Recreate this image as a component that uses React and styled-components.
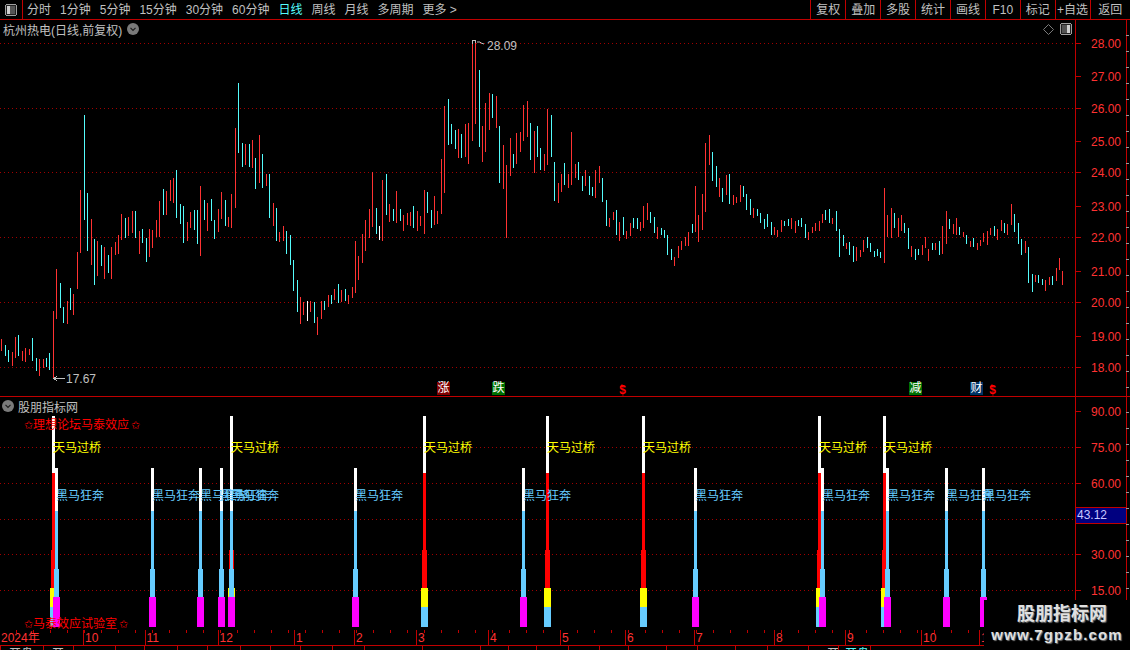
import React from "react";
import styled, { createGlobalStyle } from "styled-components";

const CJK = `"Liberation Sans", "Noto Sans CJK SC", sans-serif`;
const LINE = "#c00000";
const TEXT = "#c0c0c0";
const NUM = "#ff3232";

const GlobalStyle = createGlobalStyle`
  html, body { margin: 0; padding: 0; background: #000; }
  body { font-family: ${CJK}; font-size: 12px; }
`;

// low-high of each daily bar, left to right
const candles = `r339-351 c345-356 c350-362 r352-366 r337-358 c335-356 r351-361 r348-362 r349-355 c338-361 c358-371 r359-376 r359-368 c358-367 c353-370 r311-378
r269-319 c283-308 c307-323 r301-324 c288-310 r294-315 r252-289 r190-253 c115-220 c193-251 r219-265 c239-285 r241-276 c245-266 r247-279 c255-273 r247-279 r242-255 r235-254 r214-240
c218-238 r217-236 r211-233 c211-238 r231-254 c229-243 c238-262 r229-257 r230-248 r220-237 r201-237 c189-215 r191-215 r180-201 r178-203 c170-218 c204-224 c206-243 r222-241 r212-228
c210-230 c210-244 r186-256 c200-220 r203-231 c199-221 c220-239 r209-232 r192-219 c200-226 r217-227 r194-228 r128-208 c83-153 c143-167 r144-165 c144-167 r140-168 c158-189 r135-183
c154-188 r174-186 c174-218 r203-226 c208-241 r232-242 r226-241 c231-254 c235-265 c260-291 c280-312 r297-324 r302-315 w301-321 r301-312 c302-323 r317-335 r301-319 c301-310 r295-307
c295-304 r289-300 c284-303 r290-302 c289-301 r295-304 r287-298 r241-293 r256-280 r234-263 r220-251 r209-238 r172-227 c208-234 w226-240 r180-241 c174-215 r204-222 c209-221 r191-223
c209-221 r215-231 r213-225 r212-226 c206-228 r211-231 r216-226 r190-234 c192-213 c210-228 r196-225 r211-224 r159-214 r106-193 c99-145 c124-144 c130-149 r129-158 c134-158 r124-157
r123-164 r40-141 r43-124 c70-147 r126-162 r103-152 r93-130 c94-118 r96-128 c126-183 r145-189 r165-238 r138-176 c154-168 r133-164 r132-152 r105-141 r101-137 c123-160 r131-173
c126-157 c148-170 r154-171 r109-165 c115-157 c162-201 r183-203 r174-192 c163-185 r174-188 r132-185 r164-178 c162-180 c176-191 r170-186 c176-195 c187-196 r170-198 r166-183 c178-202
c200-226 r218-227 r212-220 c210-235 r222-241 c217-235 r231-239 r223-236 c218-228 c218-229 r222-231 r206-228 r203-220 c212-223 c217-233 r227-239 c228-235 c230-238 c235-255 c249-260
r257-266 r246-258 r241-250 r237-246 r232-246 c224-233 r186-232 r215-242 r194-230 r143-212 r135-165 c152-181 c166-187 r178-197 c188-202 r175-195 c174-204 r195-205 r197-203 r185-202
c186-197 c194-210 c199-215 r208-218 c209-216 c213-223 c219-229 c214-227 c222-235 r227-235 r230-237 r220-232 c221-226 c219-226 r218-229 r221-233 c220-226 c218-227 c224-238 r232-240
r227-233 r223-231 r221-231 r214-223 c210-220 c209-223 r218-224 c211-231 c229-257 c235-246 r243-249 c242-255 c246-262 r247-261 r250-257 r240-252 c237-248 c243-252 c251-257 c249-256
c252-258 r188-263 r215-237 r208-238 c213-228 r218-237 r215-231 c223-233 c228-249 r246-257 c249-260 c249-255 r245-255 r237-248 r249-261 c243-250 r243-250 c241-255 r226-254 r211-244
c219-229 r224-234 r218-235 c227-235 r232-237 c235-244 r241-247 c238-247 r243-250 r240-246 r233-242 r231-245 r228-235 c226-236 r229-240 r220-231 c223-233 r224-235 r204-225 c214-232
c223-244 c239-255 r241-253 c247-283 c274-292 r275-282 c275-283 c279-285 r280-291 r277-285 c276-285 r268-281 r258-270 r271-285`
  .split(/\s+/)
  .map((s, i) => {
    const [top, bottom] = s.slice(1).split("-").map(Number);
    return { x: Math.round(1.3 + i * 3.434), top, bottom, kind: s[0] };
  });

const CANDLE_COLOR = { r: "#ff3232", c: "#54fcfc", w: "#ffffff" };
const priceGrid = [43.5, 108.5, 172.5, 237.5, 302.5, 367.5];
const indGrid = [447.5, 483.5, 519.5, 554.5, 590.5];

const priceLabels = [
  ["28.00", 44], ["27.00", 77], ["26.00", 109], ["25.00", 142], ["24.00", 173], ["23.00", 207],
  ["22.00", 238], ["21.00", 272], ["20.00", 303], ["19.00", 337], ["18.00", 368],
];
const indLabels = [["90.00", 412], ["75.00", 448], ["60.00", 484], ["30.00", 555], ["15.00", 591]];

// left edge of the white stem of each signal
const bridges = [52, 230, 423, 546, 642, 818, 883];
const horses = [55, 151, 199, 220, 230, 354, 522, 694, 821, 886, 945, 982];

const leftTabs = ["分时", "1分钟", "5分钟", "15分钟", "30分钟", "60分钟", "日线", "周线", "月线", "多周期"];
const rightTabs = ["复权", "叠加", "多股", "统计", "画线", "F10", "标记", "+自选", "返回"];

const dates = [
  ["2024年", 83], ["10", 61.5], ["11", 73], ["12", 76.5], ["1", 60], ["2", 62], ["3", 72], ["4", 72],
  ["5", 65], ["6", 69], ["7", 80], ["8", 71], ["9", 76], ["10", 58], ["1", 30],
];
const statusCells = [
  { w: 43, text: "开盘", pad: 8 }, { w: 30, text: "开", pad: 8 }, { w: 42 }, { w: 29 }, { w: 33 }, { w: 30 },
  { w: 33 }, { w: 30 }, { w: 30 }, { w: 32 }, { w: 32 }, { w: 58 }, { w: 58 }, { w: 28 }, { w: 28 }, { w: 32 },
  { w: 31 }, { w: 29 }, { w: 38 }, { w: 31 }, { w: 38 }, { w: 32 }, { w: 41 },
  { w: 30, text: "开", pad: 18 }, { w: 32, text: "开盘", pad: 6, color: "#54fcfc" }, { w: 114 },
];

const Page = styled.div`
  position: relative;
  width: 1130px;
  height: 650px;
  overflow: hidden;
  background: #000;
  color: ${TEXT};
`;

const Toolbar = styled.div`
  display: flex;
  height: 19px;
  border-bottom: 1px solid ${LINE};
  line-height: 20px;
`;

const IconCell = styled.div`
  display: flex;
  align-items: center;
  justify-content: center;
  width: 22px;
  border-right: 1px solid ${LINE};
`;

const TabGroup = styled.div`
  display: flex;
  flex: 1;
  gap: 9px;
  padding-left: 4px;
`;

const Tab = styled.span`
  color: ${(p) => (p.$active ? "#54fcfc" : TEXT)};
  white-space: nowrap;
`;

const ToolButton = styled.div`
  width: ${(p) => p.$w || 34.9}px;
  border-left: 1px solid ${LINE};
  text-align: center;
  white-space: nowrap;
  box-sizing: border-box;
`;

const Panel = styled.div`
  display: flex;
  height: ${(p) => p.$h}px;
  border-bottom: 1px solid ${(p) => p.$line || LINE};
  box-sizing: border-box;
`;

const Plot = styled.div`
  position: relative;
  width: 1075px;
`;

const ChartSvg = styled.svg`
  position: absolute;
  left: 0;
  top: 0;
  display: block;
  shape-rendering: crispEdges;
`;

const GridLine = styled.line`
  stroke: #a00000;
  stroke-dasharray: 1 3;
  shape-rendering: auto;
`;

const PanelHead = styled.div`
  position: relative;
  display: flex;
  align-items: center;
  gap: ${(p) => p.$gap}px;
  height: 18px;
  padding-left: ${(p) => p.$pad}px;
  white-space: nowrap;
`;

const HeadIcons = styled.div`
  display: flex;
  align-items: center;
  gap: 6px;
  margin-left: auto;
  margin-right: 3px;
`;

const Axis = styled.div`
  position: relative;
  width: 52px;
  border-left: 1px solid ${LINE};
  border-right: 1px solid ${LINE};
  box-sizing: border-box;
  &::after {
    content: "";
    position: absolute;
    left: 100%;
    top: 0;
    bottom: 0;
    width: 3px;
    background: repeating-linear-gradient(180deg, transparent 0 15px, #9a9a9a 15px 16px);
  }
`;

const AxisLabel = styled.span`
  position: absolute;
  left: 15px;
  top: ${(p) => p.$y}px;
  transform: translateY(-50%);
  color: ${NUM};
  line-height: 14px;
  &::before {
    content: "";
    position: absolute;
    left: -15px;
    top: 6px;
    width: 5px;
    height: 1px;
    background: ${LINE};
  }
`;

const CurrentValue = styled.div`
  position: absolute;
  left: 0;
  right: 0;
  top: ${(p) => p.$y}px;
  height: 15px;
  line-height: 15px;
  background: #000080;
  border-top: 1px solid ${LINE};
  border-bottom: 1px solid ${LINE};
  color: #c8c8ff;
  padding-left: 1px;
`;

const Extreme = styled.span`
  position: absolute;
  left: ${(p) => p.$x}px;
  top: ${(p) => p.$y}px;
  line-height: 14px;
  white-space: nowrap;
`;

const EventBadge = styled.span`
  position: absolute;
  left: ${(p) => p.$x}px;
  top: 362px;
  width: 13px;
  height: 13px;
  background: ${(p) => p.$bg};
  color: #fff;
  font-size: 12px;
  line-height: 13px;
  text-align: center;
`;

const Dollar = styled.span`
  position: absolute;
  left: ${(p) => p.$x}px;
  top: 367px;
  width: 7px;
  color: #ff0000;
  font: bold 12px/9px "Liberation Mono", monospace;
  &::before {
    content: "";
    position: absolute;
    left: 1px;
    top: -3px;
    border-left: 2.5px solid transparent;
    border-right: 2.5px solid transparent;
    border-bottom: 3px solid #ff0000;
  }
`;

const SignalLabel = styled.span`
  position: absolute;
  left: ${(p) => p.$x}px;
  top: ${(p) => p.$y}px;
  color: ${(p) => p.$color};
  line-height: 14px;
  white-space: nowrap;
`;

const Star = styled.span`
  display: inline-block;
  width: 8px;
  font-family: "DejaVu Sans", sans-serif;
  font-size: 11px;
  font-weight: bold;
  text-align: center;
  margin: 0 ${(p) => p.$gap || 1}px 0 ${(p) => (p.$gap ? 2 : 0)}px;
`;

const DateRow = styled.div`
  display: flex;
  height: 15px;
  line-height: 17px;
  border-bottom: 1px solid ${LINE};
  background: repeating-linear-gradient(90deg, transparent 0 16px, ${LINE} 16px 17px) top / 100% 3px no-repeat;
  color: ${NUM};
`;

const DateCell = styled.div`
  width: ${(p) => p.$w}px;
  flex: none;
  padding-left: 1px;
  box-sizing: border-box;
  border-left: ${(p) => (p.$first ? "none" : `1px solid ${LINE}`)};
  white-space: nowrap;
  overflow: hidden;
`;

const StatusRow = styled.div`
  display: flex;
  height: 4px;
  overflow: hidden;
`;

const StatusCell = styled.div`
  width: ${(p) => p.$w}px;
  flex: none;
  box-sizing: border-box;
  border-left: 1px solid ${LINE};
  padding-left: ${(p) => p.$pad || 0}px;
  line-height: 17px;
  color: ${(p) => p.$color || TEXT};
  white-space: nowrap;
`;

const Watermark = styled.div`
  position: absolute;
  right: 0;
  bottom: 0;
  width: 146px;
  height: 50px;
  background: #000;
  display: flex;
  flex-direction: column;
  align-items: center;
  color: #e0e0e0;
  font-weight: bold;
`;

const WaterTitle = styled.div`
  font-size: 18px;
  line-height: 24px;
  margin: 2px 0 0 10px;
  text-shadow: 1px 1px 1px #777;
`;

const WaterUrl = styled.div`
  font-size: 15px;
  line-height: 18px;
  letter-spacing: 1.1px;
  font-family: "Liberation Sans", sans-serif;
  text-shadow: 1px 1px 1px #777;
`;

function RoundChevron() {
  return (
    <svg width="12" height="12" viewBox="0 0 12 12">
      <circle cx="6" cy="6" r="6" fill="#7a7a7a" />
      <path d="M3.5 4.8 L6 7.3 L8.5 4.8" fill="none" stroke="#1c1c1c" strokeWidth="1.2" />
    </svg>
  );
}

function PanelIcon({ side }) {
  return (
    <svg width="12" height="12" viewBox="0 0 12 12" shapeRendering="crispEdges">
      <rect x="0.5" y="0.5" width="11" height="11" rx="2" fill="#222" stroke="#a0a0a0" />
      <rect x={side === "right" ? 7 : 2} y="2" width="3" height="8" fill="#d0d0d0" />
      <rect x={side === "right" ? 2 : 5} y="2" width="5" height="8" fill="#555" />
    </svg>
  );
}

function DiamondIcon() {
  return (
    <svg width="11" height="11" viewBox="0 0 11 11">
      <path d="M5.5 0.5 L10.5 5.5 L5.5 10.5 L0.5 5.5 Z" fill="none" stroke="#7a7a7a" />
    </svg>
  );
}

function PriceChart() {
  return (
    <ChartSvg width="1075" height="377" viewBox="0 20 1075 377">
      {priceGrid.map((y) => (
        <GridLine key={y} x1="0" x2="1075" y1={y} y2={y} />
      ))}
      {candles.map((c, i) => (
        <rect key={i} x={c.x} y={c.top} width="1" height={c.bottom - c.top} fill={CANDLE_COLOR[c.kind]} />
      ))}
      <path d="M472.5 44 V40.5 H475.5 V43" fill="none" stroke={TEXT} />
      <path d="M477 42 L480 42 L481 43 L484 44" fill="none" stroke={TEXT} shapeRendering="auto" />
      <path d="M53 378.5 H65 M53 378.5 L57 376.5 M53 378.5 L57 380.5" fill="none" stroke={TEXT} />
    </ChartSvg>
  );
}

function IndicatorChart() {
  const bar = (x, w, y1, y2, fill, key) => (
    <rect key={key} x={x} y={y1} width={w} height={y2 - y1} fill={fill} />
  );
  return (
    <ChartSvg width="1075" height="233" viewBox="0 397 1075 233">
      {indGrid.map((y) => (
        <GridLine key={y} x1="0" x2="1075" y1={y} y2={y} />
      ))}
      {bridges.map((x) => (
        <g key={x}>
          {bar(x, 3, 416, 473, "#ffffff", "a")}
          {bar(x, 3, 473, 550, "#ff0000", "b")}
          {bar(x - 1, 5, 550, 588, "#ff0000", "c")}
          {bar(x - 2, 7, 588, 607, "#ffff00", "d")}
          {bar(x - 2, 7, 607, 627, "#66ccff", "e")}
        </g>
      ))}
      {horses.map((x) => (
        <g key={x}>
          {bar(x, 3, 468, 511, "#ffffff", "a")}
          {bar(x, 3, 511, 569, "#66ccff", "b")}
          {bar(x - 1, 5, 569, 597, "#66ccff", "c")}
          {bar(x - 2, 7, 597, 627, "#ff00ff", "d")}
        </g>
      ))}
    </ChartSvg>
  );
}

function App() {
  return (
    <Page>
      <GlobalStyle />
      <Toolbar>
        <IconCell>
          <PanelIcon side="left" />
        </IconCell>
        <TabGroup>
          {leftTabs.map((t) => (
            <Tab key={t} $active={t === "日线"}>{t}</Tab>
          ))}
          <Tab>更多 &gt;</Tab>
        </TabGroup>
        {rightTabs.map((t, i) => (
          <ToolButton key={t} $w={i === rightTabs.length - 1 ? 40.5 : undefined}>{t}</ToolButton>
        ))}
      </Toolbar>

      <Panel $h={377}>
        <Plot>
          <PriceChart />
          <PanelHead $pad={3} $gap={5}>
            <span>杭州热电(日线,前复权)</span>
            <RoundChevron />
            <HeadIcons>
              <DiamondIcon />
              <PanelIcon side="right" />
            </HeadIcons>
          </PanelHead>
          <Extreme $x={487} $y={19}>28.09</Extreme>
          <Extreme $x={66} $y={352}>17.67</Extreme>
          <EventBadge $x={437} $bg="#800000">涨</EventBadge>
          <EventBadge $x={492} $bg="#007000">跌</EventBadge>
          <Dollar $x={619}>$</Dollar>
          <EventBadge $x={909} $bg="#007000">减</EventBadge>
          <EventBadge $x={970} $bg="#003366">财</EventBadge>
          <Dollar $x={989}>$</Dollar>
        </Plot>
        <Axis>
          {priceLabels.map(([t, y]) => (
            <AxisLabel key={t} $y={y - 20}>{t}</AxisLabel>
          ))}
        </Axis>
      </Panel>

      <Panel $h={233} $line="transparent">
        <Plot>
          <IndicatorChart />
          <PanelHead $pad={2} $gap={4}>
            <RoundChevron />
            <span>股朋指标网</span>
          </PanelHead>
          <SignalLabel $x={24} $y={21} $color="#ff0000">
            <Star>✩</Star>理想论坛马泰效应<Star $gap={1}>✩</Star>
          </SignalLabel>
          {bridges.map((x) => (
            <SignalLabel key={x} $x={x + 1} $y={44} $color="#ffff00">天马过桥</SignalLabel>
          ))}
          {horses.map((x) => (
            <SignalLabel key={x} $x={x + 1} $y={92} $color="#66ccff">黑马狂奔</SignalLabel>
          ))}
          <SignalLabel $x={24} $y={220} $color="#ff0000">
            <Star>✩</Star>马泰效应试验室<Star $gap={1}>✩</Star>
          </SignalLabel>
        </Plot>
        <Axis>
          {indLabels.map(([t, y]) => (
            <AxisLabel key={t} $y={y - 397}>{t}</AxisLabel>
          ))}
          <CurrentValue $y={110}>43.12</CurrentValue>
        </Axis>
      </Panel>

      <DateRow>
        {dates.map(([t, w], i) => (
          <DateCell key={i} $w={w} $first={i === 0}>{t}</DateCell>
        ))}
      </DateRow>
      <StatusRow>
        {statusCells.map((c, i) => (
          <StatusCell key={i} $w={c.w} $pad={c.pad} $color={c.color}>{c.text}</StatusCell>
        ))}
      </StatusRow>

      <Watermark>
        <WaterTitle>股朋指标网</WaterTitle>
        <WaterUrl>www.7gpzb.com</WaterUrl>
      </Watermark>
    </Page>
  );
}

export default App;
